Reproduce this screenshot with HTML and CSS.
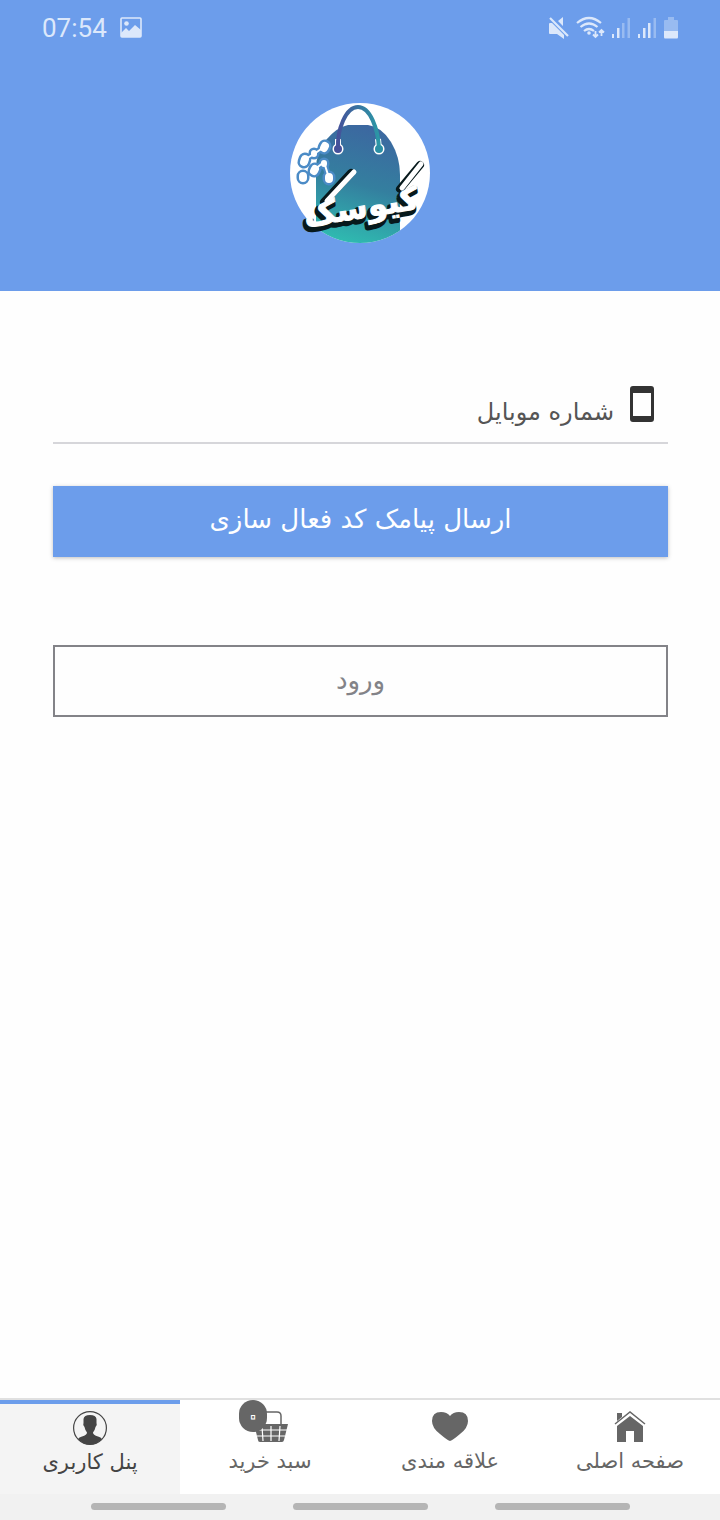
FILE: index.html
```
<!DOCTYPE html>
<html lang="fa" dir="rtl">
<head>
    <meta charset="utf-8">
    <meta name="viewport" content="width=device-width, initial-scale=1">
    <title>کیوسک</title>
    <link rel="stylesheet" href="styles.css">
</head>
<body>
    <header class="header">
        <div class="status-bar" dir="ltr">
            <span class="clock">07:54</span>
            <svg class="photo-icon" width="22" height="22" viewBox="0 0 22 22">
                <rect x="1" y="1" width="20" height="19" rx="1" fill="none" stroke="currentColor" stroke-width="1.6"/>
                <circle cx="6.500" cy="6.500" r="2.300"/>
                <path d="M1 16l5-5 3 3 6-6 6 5v7H1z"/>
            </svg>
            <div class="status-icons">
                <svg width="22" height="24" viewBox="0 0 22 24">
                    <path d="M2 7h5l9 9v7l-7-5H2q-1 0-1-1V8q0-1 1-1zM15 1v9l-5-5z"/>
                    <path d="M2 2l18 18" fill="none" stroke="#6c9deb" stroke-width="4"/>
                    <path d="M2 2l18 18" fill="none" stroke="currentColor" stroke-width="2.200"/>
                </svg>
                <svg width="30" height="24" viewBox="0 0 30 24">
                    <g fill="none" stroke="currentColor" stroke-width="2.200">
                        <path d="M1 7q12-10 24 0M4.500 11q8.500-7 17 0M8 15q5-4 10 0"/>
                        <path d="M19.500 15v6M17 18.500l2.500 2.500 2.500-2.500M25.500 20v-6M23 16.500l2.500-2.500 2.500 2.500" stroke-width="1.800"/>
                    </g>
                    <circle cx="13" cy="17" r="1.800"/>
                </svg>
                <svg width="20" height="24" viewBox="0 0 20 24">
                    <path d="M0 18h2v4H0zM5 12h2.500v10H5z"/>
                    <path d="M10 7h2.500v15H10zM15.500 2H18v20h-2.500z" opacity=".4"/>
                </svg>
                <svg width="20" height="24" viewBox="0 0 20 24">
                    <path d="M0 18h2v4H0zM5 12h2.500v10H5zM10 7h2.500v15H10z"/>
                    <path d="M15.500 2H18v20h-2.500z" opacity=".4"/>
                </svg>
                <svg class="battery-icon" width="14" height="24" viewBox="0 0 14 24">
                    <path d="M4 1h6v3h3q1 0 1 1v10H0V5q0-1 1-1h3z" opacity=".4"/>
                    <path d="M0 15h14v6q0 1.500-1 1.500H1q-1 0-1-1.500z"/>
                </svg>
            </div>
        </div>
        <svg class="logo" viewBox="0 0 140 140" role="img" aria-label="کیوسک">
            <defs>
                <linearGradient id="bag" x1=".6" y1="0" x2=".4" y2="1">
                    <stop offset="0" stop-color="#3c67a0"/>
                    <stop offset=".5" stop-color="#347f9f"/>
                    <stop offset="1" stop-color="#2fbab0"/>
                </linearGradient>
                <linearGradient id="strap" x1="0" x2="1">
                    <stop offset="0" stop-color="#45519a"/>
                    <stop offset="1" stop-color="#2b98a6"/>
                </linearGradient>
                <clipPath id="disc"><circle cx="70" cy="70" r="70"/></clipPath>
            </defs>
            <circle cx="70" cy="70" r="70" fill="#fff"/>
            <path clip-path="url(#disc)" fill="url(#bag)" d="M26 140V66Q26 49 36 37Q47 24 58 22H78Q92 24 101 39Q110 54 110 72V140z"/>
            <g fill="#fff">
                <circle cx="48" cy="46" r="5.500"/>
                <circle cx="89" cy="46" r="5.500"/>
            </g>
            <path fill="none" stroke="#fff" stroke-width="6" d="M48 46L48 36M89 46L88 36"/>
            <path fill="none" stroke="url(#strap)" stroke-width="4" d="M48 46C47 26 56 4 68 4S88 25 89 46"/>
            <circle cx="48" cy="46" r="4" fill="#45519a"/>
            <circle cx="89" cy="46" r="4" fill="#2b8fa4"/>
            <!-- molecule chain -->
            <g stroke-linecap="round" stroke-linejoin="round" fill="none">
                <path stroke="#4b8bc6" stroke-width="6" d="M34 44L24 51 14 57M24 67L34 59 39 75"/>
                <path stroke="#4b8bc6" stroke-width="13" d="M35 43L34 45M15 56L14 59M25 66L24 68M13 73V75M39 74V76"/>
                <path stroke="#4b8bc6" stroke-width="11" d="M24 50V51M34 60V61"/>
                <path stroke="#fff" stroke-width="2" d="M34 44L24 51 14 57M24 67L34 59 39 75"/>
                <path stroke="#fff" stroke-width="8" d="M35 43L34 45M15 56L14 59M25 66L24 68M13 73V75M39 74V76"/>
                <path stroke="#fff" stroke-width="6" d="M24 50V51M34 60V61"/>
            </g>
            <!-- long pen strokes over both kafs -->
            <g stroke-linecap="round" fill="none">
                <path stroke="#07191c" stroke-width="8" d="M34 99L61 70M110 86L130 62"/>
                <g transform="rotate(-9 70 104)" text-anchor="middle">
                    <text class="logo-text logo-shadow" x="69" y="118">کیوسک</text>
                    <text class="logo-text logo-face" x="71" y="115">کیوسک</text>
                </g>
                <path stroke="#fff" stroke-width="5" d="M37 98L64 69M112 85L131 61"/>
            </g>
        </svg>
    </header>

    <main class="content">
        <form class="login-form">
            <div class="field">
                <label for="mobile" aria-label="شماره موبایل">
                    <svg width="24" height="36" viewBox="0 0 24 36">
                        <path fill-rule="evenodd" d="M3 0h18q3 0 3 3v30q0 3-3 3H3q-3 0-3-3V3q0-3 3-3zM3 7v23h18V7z"/>
                    </svg>
                </label>
                <input id="mobile" type="tel" dir="rtl" placeholder="شماره موبایل">
            </div>
            <button class="btn btn-send" type="button">ارسال پیامک کد فعال سازی</button>
            <button class="btn btn-login" type="submit">ورود</button>
        </form>
    </main>

    <nav class="tabs">
        <a class="tab" href="#home">
            <svg width="34" height="34" viewBox="0 0 34 34">
                <path d="M4 16L17 6l13 10v16h-9V21h-8v11H4zM4 3h5v4l-5 4z"/>
                <path d="M2 14L17 2l15 12" fill="none" stroke="currentColor" stroke-width="1.500"/>
            </svg>
            <span>صفحه اصلی</span>
        </a>
        <a class="tab" href="#favorites">
            <svg width="38" height="34" viewBox="0 0 38 34">
                <path d="M19 31Q16 30 9 24Q1 18 1 11Q1 2 10 2Q16 2 19 6Q22 2 28 2Q37 2 37 11Q37 18 29 24Q22 30 19 31z"/>
            </svg>
            <span>علاقه مندی</span>
        </a>
        <a class="tab" href="#cart">
            <span class="cart">
                <svg width="38" height="34" viewBox="0 0 38 34">
                    <path d="M3 14h34l-4 16q-.5 2-2 2H9q-2 0-2-2z"/>
                    <path d="M10 14V6q0-4 4-4h12q4 0 4 4v8" fill="none" stroke="currentColor" stroke-width="1.500"/>
                    <path d="M4 20h32M6 26h28M11 16l1 15M20 16v15M29 16l-1 15" fill="none" stroke="#fff" stroke-width="1.200"/>
                </svg>
                <span class="badge">۰</span>
            </span>
            <span>سبد خرید</span>
        </a>
        <a class="tab active" href="#profile" aria-current="page">
            <svg width="34" height="34" viewBox="0 0 34 34">
                <circle cx="17" cy="17" r="16.400" fill="none" stroke="currentColor" stroke-width="1.200"/>
                <path d="M5 28Q6 26 9 25.500Q14 24 14 21.500Q12 19 11.500 16Q9.500 14 10.500 12V8Q11 4 17 4T23.500 8V12Q24.500 14 22.500 16Q22 19 20 21.500Q20 24 25 25.500Q28 26 29 28Q24 33.500 17 33.500T5 28z"/>
            </svg>
            <span>پنل کاربری</span>
        </a>
    </nav>
    <div class="system-nav"><i></i><i></i><i></i></div>
</body>
</html>
```
FILE: styles.css
```
* {
    box-sizing: border-box;
}

body {
    display: flex;
    flex-direction: column;
    min-height: 100vh;
    margin: 0;
    background: #fefefe;
    font-family: "DejaVu Sans", sans-serif;
}

svg {
    display: block;
    fill: currentColor;
}

.header {
    height: 291px;
    background: #6c9deb;
}

.status-bar {
    display: flex;
    align-items: center;
    height: 56px;
    padding: 0 42px;
    color: #dce8fb;
}

.clock {
    font: 26px/32px Roboto, sans-serif;
}

.photo-icon {
    margin-left: 13px;
}

.status-icons {
    display: flex;
    gap: 6px;
    margin-left: auto;
}

.logo {
    width: 140px;
    height: 140px;
    margin: 47px auto 0;
}

.logo-text {
    fill: #fff;
    font-size: 32px;
    font-weight: bold;
}

.logo-face {
    stroke: #fff;
    stroke-width: 1px;
}

.logo-shadow {
    fill: #07191c;
    stroke: #07191c;
    stroke-width: 5px;
    stroke-linejoin: round;
}

.content {
    flex: 1;
    padding: 87px 52px 0 53px;
}

.login-form {
    display: flex;
    flex-direction: column;
}

.field {
    display: flex;
    align-items: flex-start;
    gap: 16px;
    height: 66px;
    padding: 8px 14px 0;
    border-bottom: 2px solid #d6d6da;
    color: #333;
}

.field input {
    flex: 1;
    min-width: 0;
    height: 52px;
    padding: 0;
    border: 0;
    outline: 0;
    background: none;
    color: #555;
    font: 24px "DejaVu Sans", sans-serif;
}

.field input::placeholder {
    color: #555;
    opacity: 1;
}

.btn {
    height: 71px;
    padding: 0 0 6px;
    border: 0;
    font: 26px "DejaVu Sans", sans-serif;
    cursor: pointer;
}

.btn-send {
    margin-top: 42px;
    background: #6c9deb;
    box-shadow: 0 1px 4px rgba(0, 0, 0, .25);
    color: #fff;
}

.btn-login {
    height: 72px;
    margin-top: 88px;
    padding-bottom: 2px;
    border: 2px solid #838388;
    background: #fefefe;
    color: #838388;
}

.tabs {
    display: grid;
    grid-template-columns: repeat(4, 1fr);
    height: 96px;
    border-top: 2px solid #e0e0e0;
    background: #fff;
}

.tab {
    display: flex;
    flex-direction: column;
    align-items: center;
    gap: 1px;
    padding-top: 10px;
    color: #666;
    font-size: 21px;
    line-height: 32px;
    text-decoration: none;
}

.tab.active {
    padding-top: 7px;
    border-top: 4px solid #6c9deb;
    background: #f4f4f4;
    color: #444;
}

.cart {
    position: relative;
}

.badge {
    position: absolute;
    top: -10px;
    left: -12px;
    width: 28px;
    height: 32px;
    border-radius: 14px;
    background: #666;
    color: #666;
    font-size: 28px;
    line-height: 32px;
    text-align: center;
    -webkit-text-stroke: 1px #fff; /* the zero reads as a ring */
}

.system-nav {
    display: flex;
    justify-content: center;
    gap: 67px;
    height: 26px;
    padding-top: 9px;
    background: #f1f1f1;
}

.system-nav i {
    width: 135px;
    height: 7px;
    border-radius: 4px;
    background: #b5b5b5;
}
```
